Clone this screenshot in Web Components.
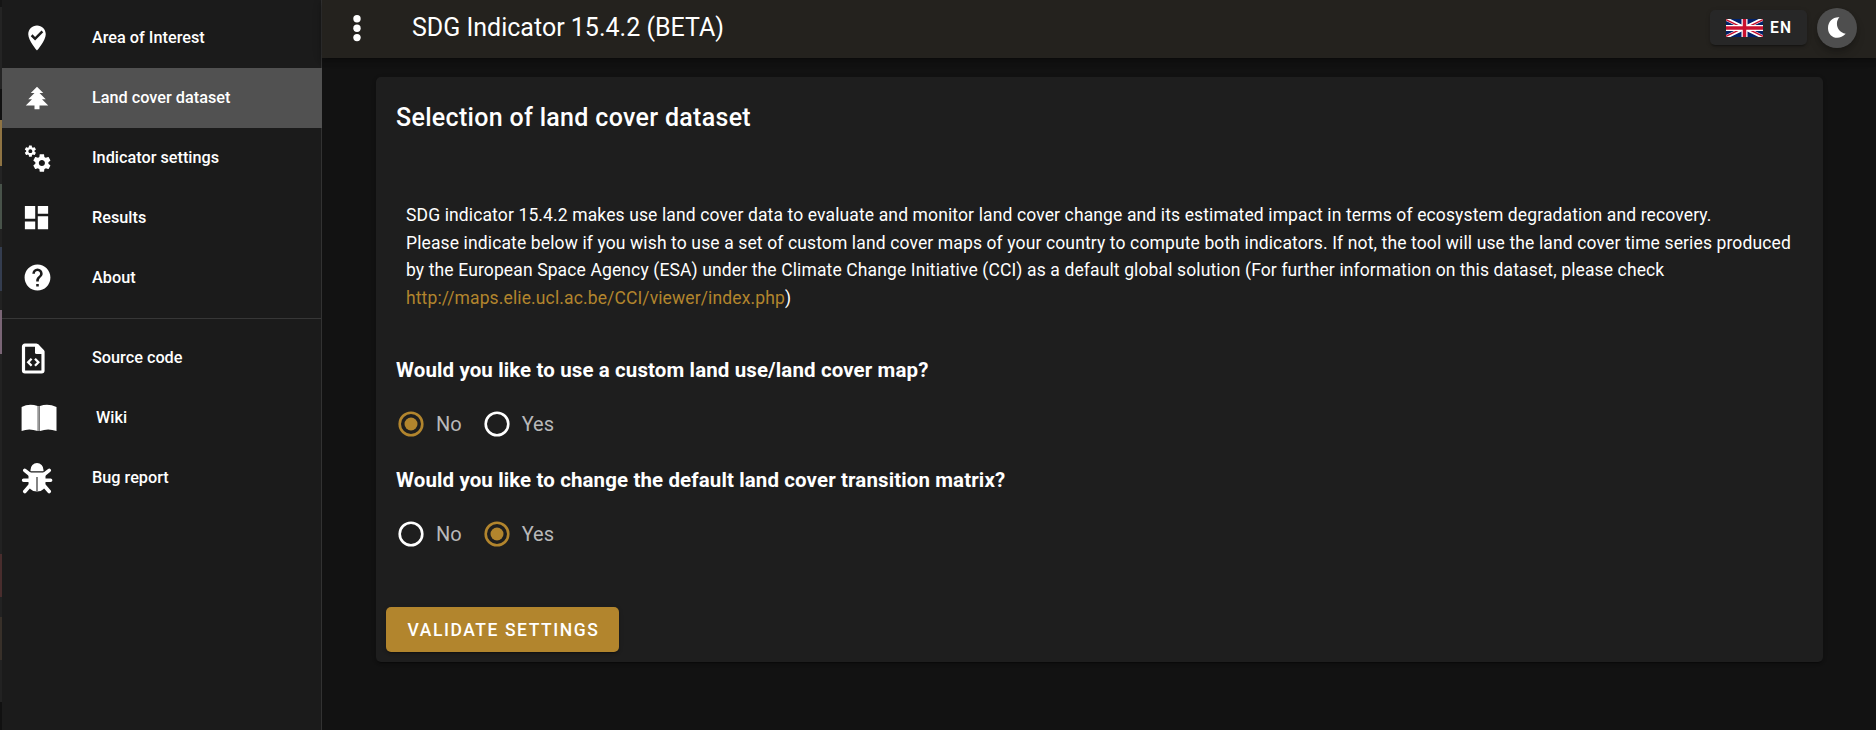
<!DOCTYPE html>
<html lang="en">
<head>
<meta charset="utf-8">
<title>SDG Indicator 15.4.2</title>
<style>
html,body{margin:0;height:100%;background:#121212;overflow:hidden}
body{font-family:Roboto,sans-serif;color:#fff}
</style>
</head>
<body>
<sdg-app></sdg-app>
<script>
function define(name, html){
  customElements.define(name, class extends HTMLElement{
    constructor(){
      super();
      const t=document.createElement('template');
      t.innerHTML=typeof html==='function'?html(this):html;
      this.attachShadow({mode:'open'}).appendChild(t.content.cloneNode(true));
    }
  });
}
const ICONS={
 area:['0 0 24 24',30,30,'<path fill="#fff" d="M12 2C15.86 2 19 5.14 19 9C19 14.25 12 22 12 22C12 22 5 14.25 5 9C5 5.14 8.14 2 12 2M10.47 14L17 7.41L15.6 6L10.47 11.18L8.4 9.09L7 10.5L10.47 14Z"/>'],
 tree:['0 0 24 24',30,30,'<path fill="#fff" d="M10 21V18H3L8 13H5L10 8H7L12 3L17 8H14L19 13H16L21 18H14V21H10Z"/>'],
 cogs:['0 0 24 24',30,30,'<path fill="#fff" d="M15.9,18.45C17.25,18.45 18.35,17.35 18.35,16C18.35,14.65 17.25,13.55 15.9,13.55C14.54,13.55 13.45,14.65 13.45,16C13.45,17.35 14.54,18.45 15.9,18.45M21.1,16.68L22.58,17.84C22.71,17.95 22.75,18.13 22.66,18.29L21.26,20.71C21.17,20.86 21,20.92 20.83,20.86L19.09,20.16C18.73,20.44 18.33,20.67 17.91,20.85L17.64,22.7C17.62,22.87 17.47,23 17.3,23H14.5C14.32,23 14.18,22.87 14.15,22.7L13.89,20.85C13.46,20.67 13.07,20.44 12.71,20.16L10.96,20.86C10.81,20.92 10.62,20.86 10.54,20.71L9.14,18.29C9.05,18.13 9.09,17.95 9.22,17.84L10.7,16.68L10.65,16L10.7,15.31L9.22,14.16C9.09,14.05 9.05,13.86 9.14,13.71L10.54,11.29C10.62,11.13 10.81,11.07 10.96,11.13L12.71,11.84C13.07,11.56 13.46,11.32 13.89,11.15L14.15,9.29C14.18,9.13 14.32,9 14.5,9H17.3C17.47,9 17.62,9.13 17.64,9.29L17.91,11.15C18.33,11.32 18.73,11.56 19.09,11.84L20.83,11.13C21,11.07 21.17,11.13 21.26,11.29L22.66,13.71C22.75,13.86 22.71,14.05 22.58,14.16L21.1,15.31L21.15,16L21.1,16.68M6.69,8.07C7.56,8.07 8.26,7.37 8.26,6.5C8.26,5.63 7.56,4.92 6.69,4.92A1.58,1.58 0 0,0 5.11,6.5C5.11,7.37 5.82,8.07 6.69,8.07M10.03,6.94L11,7.68C11.07,7.75 11.09,7.87 11.03,7.97L10.13,9.53C10.08,9.63 9.96,9.67 9.86,9.63L8.74,9.18L8,9.62L7.81,10.81C7.79,10.92 7.7,11 7.59,11H5.79C5.67,11 5.58,10.92 5.56,10.81L5.4,9.62L4.64,9.18L3.52,9.63C3.41,9.67 3.3,9.63 3.24,9.53L2.34,7.97C2.28,7.87 2.31,7.75 2.39,7.68L3.34,6.94L3.31,6.5L3.34,6.06L2.39,5.32C2.31,5.25 2.28,5.13 2.34,5.03L3.24,3.47C3.3,3.37 3.41,3.33 3.52,3.37L4.63,3.82L5.4,3.38L5.56,2.19C5.58,2.08 5.67,2 5.79,2H7.59C7.7,2 7.79,2.08 7.81,2.19L8,3.38L8.74,3.82L9.86,3.37C9.96,3.33 10.08,3.37 10.13,3.47L11.03,5.03C11.09,5.13 11.07,5.25 11,5.32L10.03,6.06L10.06,6.5L10.03,6.94Z"/>'],
 dash:['0 0 24 24',31,31,'<path fill="#fff" d="M13,3V9H21V3M13,21H21V11H13M3,21H11V15H3M3,13H11V3H3V13Z"/>'],
 help:['0 0 24 24',31,31,'<path fill="#fff" d="M15.07,11.25L14.17,12.17C13.45,12.89 13,13.5 13,15H11V14.5C11,13.39 11.45,12.39 12.17,11.67L13.41,10.41C13.78,10.05 14,9.55 14,9C14,7.89 13.1,7 12,7A2,2 0 0,0 10,9H8A4,4 0 0,1 12,5A4,4 0 0,1 16,9C16,9.88 15.64,10.67 15.07,11.25M13,19H11V17H13M12,2A10,10 0 0,0 2,12A10,10 0 0,0 12,22A10,10 0 0,0 22,12C22,6.47 17.5,2 12,2Z"/>'],
 code:['0 0 24 32',24,32,'<path fill="none" stroke="#fff" stroke-width="3.2" stroke-linejoin="round" d="M3.9 2.2H15.5L22 8.7V27.6Q22 29 20.6 29H3.9Q2.5 29 2.5 27.6V3.6Q2.5 2.2 3.9 2.2Z"/><path fill="#fff" d="M14 1H17L23 7.5V11H15.5Q14 11 14 9.5Z"/><path fill="none" stroke="#fff" stroke-width="2.3" d="M10.6 15.7L7.2 19.2L10.6 22.7M14 15.7L17.4 19.2L14 22.7"/>'],
 book:['0 0 36 28',36,28,'<path fill="#fff" d="M.6 3Q8-1 16.7 2V27Q8 24 .6 27ZM19 2Q27-1 35.5 3V27Q27 24 19 27Z"/><path stroke="#999" stroke-width="2" d="M17.8 2V27"/>'],
 bug:['0 0 32 32',32,32,'<path fill="#fff" d="M9.5 9.3V8A6.3 6.8 0 0 1 22.5 8V9.3Z"/><path fill="#fff" d="M7.5 10.5H24.5V21Q24.5 29.6 16 29.6T7.5 21Z"/><path fill="none" stroke="#fff" stroke-width="3.6" stroke-linecap="round" d="M9 12.5L3.8 8.3M8 18.3H2.6M9 23.5L3.8 29.5M23 12.5L28.2 8.3M24 18.3H29.6M23 23.5L28.2 29.5"/><path stroke="#666" stroke-width="1.6" d="M16 15V29.6"/>']
};
define('left-edge',`<style>
:host{display:block;height:100%;background:linear-gradient(#151515 0 7px,#242424 7px 89px,#111 89px 120px,#8f7443 120px 166px,#242424 166px 184px,#48534a 184px 229px,#222 229px 247px,#343d50 247px 291px,#222 291px 310px,#7a6576 310px 354px,#222 354px 554px,#492d2d 554px 597px,#222 597px 617px,#383029 617px 660px,#222 660px 702px,#111 702px)}
</style>`);
define('nav-item',el=>{
  const [vb,w,h,body]=ICONS[el.getAttribute('icon')];
  return `<style>
:host{display:flex;align-items:center;height:60px;padding-left:16px;box-sizing:border-box;font-size:16.25px;font-weight:500;line-height:20px}
:host([active]){background:#515151}
.i{width:74px;height:36px;display:flex;align-items:center;flex:none}
svg{display:block;margin-left:${+(el.getAttribute('x')||0)}px;margin-top:${+(el.getAttribute('y')||0)}px}
</style><span class="i"><svg width="${w}" height="${h}" viewBox="${vb}">${body}</svg></span><span class="t"><slot></slot></span>`;
});
define('nav-drawer',`<style>
:host{display:block;box-sizing:border-box;height:100%;background:#1b1b1b;border-right:1px solid #323232;padding-top:8px}
hr{border:0;height:1px;background:#373737;margin:10px 0 9px}
nav-item{margin-right:-1px}
</style>
<nav-item icon="area" x="4">Area of Interest</nav-item>
<nav-item icon="tree" x="4" active>Land cover dataset</nav-item>
<nav-item icon="cogs" x="4">Indicator settings</nav-item>
<nav-item icon="dash" x="3" y="-1">Results</nav-item>
<nav-item icon="help" x="3.5" y="-1">About</nav-item>
<hr>
<nav-item icon="code" x="3" y="2">Source code</nav-item>
<nav-item icon="book" x="3">&nbsp;Wiki</nav-item>
<nav-item icon="bug" x="3">Bug report</nav-item>`);
define('uk-flag',`<style>:host{display:block;width:37px;height:18px}svg{display:block}</style>
<svg width="37" height="18" viewBox="0 0 37 18"><path fill="#012169" d="M0 0H37V18H0Z"/><path stroke="#fff" stroke-width="3.8" d="M0 0L37 18M37 0L0 18"/><path stroke="#c8102e" stroke-width="1.3" d="M0 .7L18 9.4M19 8.6L37 17.3M37 .7L19 9.4M18 8.6L0 17.3"/><path stroke="#fff" stroke-width="6" d="M18.5 0V18M0 9H37"/><path stroke="#c8102e" stroke-width="3.5" d="M18.5 0V18M0 9H37"/></svg>`);
define('app-bar',`<style>
:host{display:flex;align-items:center;height:58px;box-sizing:border-box;padding:0 19px 3px 32px;background:#24221e;box-shadow:0 2px 4px -1px rgba(0,0,0,.2),0 4px 5px rgba(0,0,0,.14),0 1px 10px rgba(0,0,0,.12)}
.t{margin-left:52px;font-size:25px;line-height:36px;flex:1}
.l{display:flex;align-items:center;box-sizing:border-box;width:97px;height:35px;padding-left:16px;gap:7px;background:#272727;border-radius:5px;font-size:15.6px;font-weight:600;letter-spacing:1.2px;box-shadow:0 3px 1px -2px rgba(0,0,0,.2),0 2px 2px rgba(0,0,0,.14),0 1px 5px rgba(0,0,0,.12)}
.m{display:flex;width:40px;height:40px;margin-left:10px;border-radius:50%;background:#4e4e4e;align-items:center;justify-content:center;box-shadow:0 3px 5px -1px rgba(0,0,0,.2),0 6px 10px rgba(0,0,0,.14)}
</style>
<svg width="6" height="30" viewBox="0 0 6 30" style="overflow:visible"><g fill="#fff"><circle cx="3" cy="5.8" r="3.7"/><circle cx="3" cy="15.2" r="3.7"/><circle cx="3" cy="24.6" r="3.7"/></g></svg>
<span class="t">SDG Indicator 15.4.2 (BETA)</span>
<span class="l"><uk-flag></uk-flag>EN</span>
<span class="m"><svg width="20" height="22" viewBox="0 0 20 22"><path fill="#fff" d="M12.5.3C7.8 4.8 9.4 15 18.7 16.7C11.5 24.5 1 20.2 1 11.2C1 4.2 6.2-.3 12.5.3Z"/></svg></span>`);
define('radio-option',el=>{
  const on=el.hasAttribute('checked'),c=on?'#b2852d':'#fff';
  return `<style>:host{display:flex;align-items:center;font-size:20px;line-height:24px;color:#b9b9b9}svg{display:block;margin-right:12px}</style>
<svg width="26" height="26" viewBox="0 0 26 26"><circle cx="13" cy="13" r="11.3" fill="none" stroke="${c}" stroke-width="2.6"/>${on?`<circle cx="13" cy="13" r="6.5" fill="${c}"/>`:''}</svg><slot></slot>`;
});
define('radio-question',`<style>
:host{display:block;height:110px}
.q{font-size:20.475px;font-weight:700;line-height:28px;letter-spacing:.125px;padding-left:20px}
.o{display:flex;gap:22px;padding:27px 0 0 22px}
</style><div class="q"><slot name="title"></slot></div><div class="o"><slot></slot></div>`);
define('content-card',`<style>
:host{display:block;box-sizing:border-box;width:1447px;height:585px;background:#1e1e1e;border-radius:5px;box-shadow:0 3px 1px -2px rgba(0,0,0,.2),0 2px 2px rgba(0,0,0,.14),0 1px 5px rgba(0,0,0,.12)}
h2{margin:0;padding:23px 20px 0;font-size:25px;font-weight:500;line-height:36px;letter-spacing:.3125px}
.p{margin:66px 0 44px;padding:0 30px;font-size:17.5px;line-height:27.5px;letter-spacing:.125px;white-space:nowrap}
.p a{color:#b2852d}
.p div{width:max-content}
.b{display:flex;align-items:center;justify-content:center;box-sizing:border-box;padding-left:2px;margin:31px 0 0 10px;width:233px;height:45px;border-radius:5px;background:#b2852d;font-size:17.5px;font-weight:500;letter-spacing:1.5625px;box-shadow:0 3px 1px -2px rgba(0,0,0,.2),0 2px 2px rgba(0,0,0,.14),0 1px 5px rgba(0,0,0,.12)}
</style>
<h2>Selection of land cover dataset</h2>
<div class="p"><div>SDG indicator 15.4.2 makes use land cover data to evaluate and monitor land cover change and its estimated impact in terms of ecosystem degradation and recovery.</div><div>Please indicate below if you wish to use a set of custom land cover maps of your country to compute both indicators. If not, the tool will use the land cover time series produced</div><div>by the European Space Agency (ESA) under the Climate Change Initiative (CCI) as a default global solution (For further information on this dataset, please check</div><div><a>http://maps.elie.ucl.ac.be/CCI/viewer/index.php</a>)</div></div>
<radio-question><span slot="title">Would you like to use a custom land use/land cover map?</span><radio-option checked>No</radio-option><radio-option>Yes</radio-option></radio-question>
<radio-question><span slot="title">Would you like to change the default land cover transition matrix?</span><radio-option>No</radio-option><radio-option checked>Yes</radio-option></radio-question>
<div class="b">VALIDATE SETTINGS</div>`);
define('sdg-app',`<style>
:host{display:grid;grid-template-columns:2px 320px 1fr;height:730px}
main{padding:19px 0 0 54px}
</style><left-edge></left-edge><nav-drawer></nav-drawer><section><app-bar></app-bar><main><content-card></content-card></main></section>`);
</script>
</body>
</html>
